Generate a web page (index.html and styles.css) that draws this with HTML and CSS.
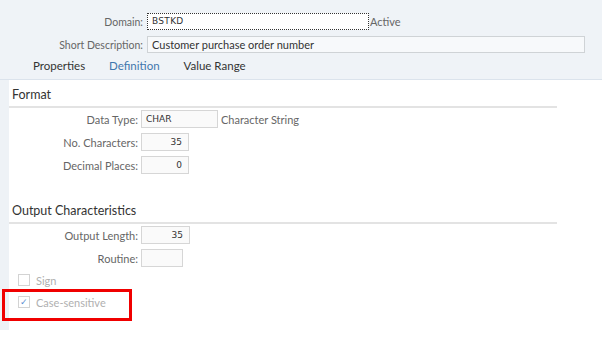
FILE: index.html
```html
<!DOCTYPE html>
<html lang="en">
<head>
    <meta charset="UTF-8">
    <title>Domain BSTKD</title>
    <link rel="stylesheet" href="styles.css">
</head>
<body>
    <div class="header">
        <div class="head-row">
            <span class="label">Domain:</span>
            <span class="input domain-input">BSTKD</span>
            <span class="status">Active</span>
        </div>
        <div class="head-row">
            <span class="label">Short Description:</span>
            <span class="input desc-input">Customer purchase order number</span>
        </div>
        <div class="tabs">
            <span class="tab">Properties</span>
            <span class="tab selected">Definition</span>
            <span class="tab">Value Range</span>
        </div>
    </div>

    <div class="main">
        <div class="strip"></div>
        <div class="content">
            <div class="section-title">Format</div>
            <div class="fields">
                <span class="f-label">Data Type:</span>
                <div class="f-value"><span class="box w-type">CHAR</span><span class="hint">Character String</span></div>
                <span class="f-label">No. Characters:</span>
                <div class="f-value"><span class="box num w-48">35</span></div>
                <span class="f-label">Decimal Places:</span>
                <div class="f-value"><span class="box num w-48">0</span></div>
            </div>

            <div class="section-title second">Output Characteristics</div>
            <div class="fields">
                <span class="f-label">Output Length:</span>
                <div class="f-value"><span class="box num w-49">35</span></div>
                <span class="f-label">Routine:</span>
                <div class="f-value"><span class="box w-42"></span></div>
            </div>

            <div class="checks">
                <div class="check"><span class="cb"></span>Sign</div>
                <div class="check"><span class="cb checked">&#10003;</span>Case-sensitive</div>
            </div>
        </div>
    </div>

    <div class="highlight"></div>
</body>
</html>
```

FILE: styles.css
```css
* {
    margin: 0;
    padding: 0;
    box-sizing: border-box;
}

body {
    width: 602px;
    height: 338px;
    background: #fff;
    font-family: Lato, 'Liberation Sans', sans-serif;
    font-size: 11px;
    color: #333;
    position: relative;
    overflow: hidden;
}

/* header area */
.header {
    height: 80px;
    background: #eff3f7;
    border-bottom: 1px solid #dbe3ec;
    padding-top: 13px;
}

.head-row {
    display: flex;
    align-items: center;
    height: 17px;
    margin-bottom: 6px;
}

.label {
    width: 147px;
    text-align: right;
    color: #666;
    padding-right: 4px;
    font-size: 10.5px;
}

.input {
    height: 17px;
    line-height: 15px;
    padding-left: 4px;
    background: #f7f9fb;
    border: 1px solid #cfd3d6;
    color: #333;
}

.domain-input {
    width: 222px;
    border: 1px dotted #333;
    font-family: 'DejaVu Sans', sans-serif;
    font-size: 9px;
    letter-spacing: 0.3px;
    background: #fff;
}

.status {
    color: #666;
    margin-left: 1px;
}

.desc-input {
    width: 438px;
    height: 17px;
}

.tabs {
    display: flex;
    padding-left: 33px;
    margin-top: 3px;
    font-size: 11.5px;
}

.tab {
    margin-right: 24px;
    color: #333;
}

.tab.selected {
    color: #3f77ad;
}

/* body area */
.main {
    display: flex;
}

.strip {
    width: 9px;
    height: 250px;
    background: #eef2f6;
}

.content {
    flex: 1;
}

.section-title {
    width: 548px;
    padding: 7px 0 3px 3px;
    line-height: 16px;
    font-size: 12.5px;
    color: #333;
    border-bottom: 2px solid #e3e3e3;
}

.section-title.second {
    margin-top: 22px;
}

.fields {
    display: grid;
    grid-template-columns: 129px auto;
    column-gap: 3px;
    row-gap: 5px;
    padding-top: 2px;
    align-items: center;
}

.f-label {
    text-align: right;
    color: #666;
}

.f-value {
    display: flex;
    align-items: center;
}

.box {
    height: 18px;
    line-height: 16px;
    padding: 0 4px;
    border: 1px solid #d6d6d6;
    background: #fafafa;
    font-family: 'DejaVu Sans', sans-serif;
    font-size: 9px;
    color: #333;
}

.box.num {
    text-align: right;
    padding-right: 6px;
}

.w-type { width: 77px; }
.w-48 { width: 48px; }
.w-49 { width: 49px; }
.w-42 { width: 42px; }

.hint {
    color: #666;
    margin-left: 3px;
}

.checks {
    padding: 2px 0 0 9px;
}

.check {
    display: flex;
    align-items: center;
    height: 22px;
    color: #b0b0b0;
}

.cb {
    width: 12px;
    height: 12px;
    border: 1px solid #d3d3d3;
    margin-right: 6px;
    font-size: 9px;
    line-height: 10px;
    text-align: center;
    color: #5b8ed1;
}

/* annotation drawn over the screenshot */
.highlight {
    position: absolute;
    left: 2px;
    top: 289px;
    width: 130px;
    height: 32px;
    border: 3px solid #f00000;
}
```
